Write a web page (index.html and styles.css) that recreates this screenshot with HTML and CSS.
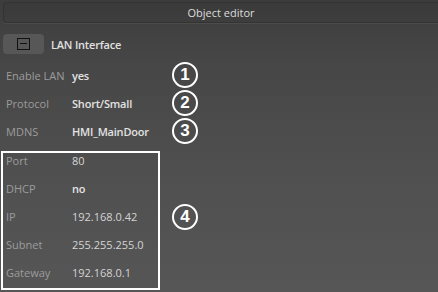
FILE: index.html
```html
<!DOCTYPE html>
<html>
<head>
<meta charset="utf-8">
<link rel="stylesheet" href="styles.css">
</head>
<body>
<div class="editor">
  <div class="header">Object editor</div>
  <div class="group">
    <button class="toggle"><span class="minus"></span></button>
    <span class="group-title">LAN Interface</span>
  </div>
  <div class="rows">
    <div class="row"><span class="label">Enable LAN</span><span class="value strong">yes</span><span class="badge">1</span></div>
    <div class="row"><span class="label">Protocol</span><span class="value strong">Short/Small</span><span class="badge">2</span></div>
    <div class="row"><span class="label">MDNS</span><span class="value strong">HMI_MainDoor</span><span class="badge">3</span></div>
  </div>
  <div class="net">
    <div class="box">
      <div class="brow"><span class="label">Port</span><span class="value">80</span></div>
      <div class="brow"><span class="label">DHCP</span><span class="value strong">no</span></div>
      <div class="brow"><span class="label">IP</span><span class="value">192.168.0.42</span></div>
      <div class="brow"><span class="label">Subnet</span><span class="value">255.255.255.0</span></div>
      <div class="brow"><span class="label">Gateway</span><span class="value">192.168.0.1</span></div>
    </div>
    <span class="badge badge4">4</span>
  </div>
</div>
</body>
</html>
```

FILE: styles.css
```css
html, body {
  margin: 0;
  padding: 0;
  height: 100%;
}
body {
  background: linear-gradient(180deg, #3c3c3c 0px, #464646 60px, #505050 180px, #565656 292px);
  font-family: "Open Sans", "Noto Sans", "DejaVu Sans", sans-serif;
  font-size: 11px;
  overflow: hidden;
}
.editor {
  padding-top: 2px;
}
.header {
  margin-left: 3px;
  height: 21px;
  box-sizing: border-box;
  border-radius: 4px 0 0 4px;
  background: linear-gradient(180deg, #3a3a3a, #3e3e3e);
  border: 1px solid #333333;
  border-right: none;
  box-shadow: 0 1px 0 #4c4c4c;
  color: #dcdcdc;
  text-align: center;
  line-height: 19px;
  font-size: 11px;
}
.group {
  display: flex;
  align-items: center;
  margin-top: 11px;
  height: 20px;
}
.toggle {
  margin: 0 0 0 3px;
  padding: 0;
  width: 41px;
  height: 20px;
  border: none;
  border-radius: 4px;
  background: #575757;
  display: flex;
  align-items: center;
  justify-content: center;
}
.minus {
  width: 13px;
  height: 12px;
  box-sizing: border-box;
  border: 1.5px solid #111;
  position: relative;
  display: block;
}
.minus::after {
  content: "";
  position: absolute;
  left: 2px;
  right: 2px;
  top: 4px;
  height: 1px;
  background: #111;
}
.group-title {
  margin-left: 7px;
  color: #e0e0e0;
  font-weight: 600;
  letter-spacing: -0.2px;
}
.rows {
  margin-top: 7px;
}
.row {
  display: flex;
  align-items: center;
  height: 28px;
  padding-left: 6px;
}
.label {
  width: 66px;
  color: #9c9c9c;
  flex: none;
}
.value {
  width: 100px;
  color: #d4d4d4;
  flex: none;
}
.strong {
  font-weight: 600;
  color: #e2e2e2;
  letter-spacing: -0.2px;
}
.badge {
  width: 26px;
  height: 26px;
  box-sizing: border-box;
  border: 2px solid #ffffff;
  border-radius: 50%;
  color: #ffffff;
  font-family: "Liberation Sans", Arial, sans-serif;
  font-weight: 700;
  font-size: 17px;
  display: flex;
  align-items: center;
  justify-content: center;
  flex: none;
}
.net {
  display: flex;
  align-items: flex-start;
  margin-top: 6px;
}
.box {
  margin-left: 1px;
  width: 159px;
  box-sizing: border-box;
  border: 2px solid #ffffff;
  padding: 0 0 9px 3px;
  display: flex;
  flex-direction: column;
  gap: 14px;
}
.brow {
  display: flex;
  align-items: center;
  height: 14px;
}
.badge4 {
  margin-left: 12px;
  margin-top: 53px;
}
```
